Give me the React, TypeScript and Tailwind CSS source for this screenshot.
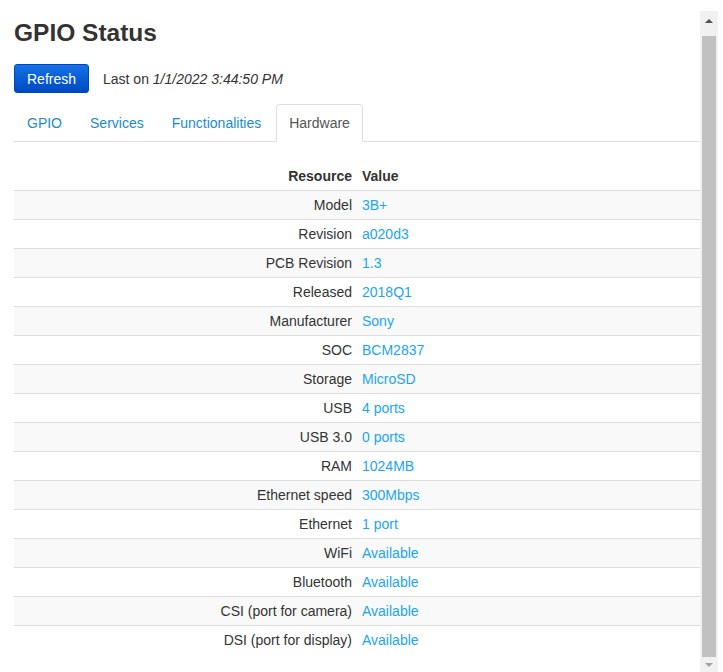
const rows: [string, string][] = [
  ["Model", "3B+"],
  ["Revision", "a020d3"],
  ["PCB Revision", "1.3"],
  ["Released", "2018Q1"],
  ["Manufacturer", "Sony"],
  ["SOC", "BCM2837"],
  ["Storage", "MicroSD"],
  ["USB", "4 ports"],
  ["USB 3.0", "0 ports"],
  ["RAM", "1024MB"],
  ["Ethernet speed", "300Mbps"],
  ["Ethernet", "1 port"],
  ["WiFi", "Available"],
  ["Bluetooth", "Available"],
  ["CSI (port for camera)", "Available"],
  ["DSI (port for display)", "Available"],
];

const tabs = ["GPIO", "Services", "Functionalities", "Hardware"];

// the page's grey scrollbar, drawn
const Scrollbar = () => (
  <div className="mt-[11px] flex h-[661px] w-[18px] shrink-0 flex-col bg-[#f1f1f1]">
    <div className="flex h-[25px] justify-center pt-[8px]">
      <svg width="8" height="4" viewBox="0 0 8 4">
        <path d="M0 4 L4 0 L8 4 Z" fill="#505050" />
      </svg>
    </div>
    <div className="mx-[2px] flex-1 bg-[#c1c1c1]" />
    <div className="flex h-[15px] justify-center pt-[6px]">
      <svg width="8" height="4" viewBox="0 0 8 4">
        <path d="M0 0 L8 0 L4 4 Z" fill="#a3a3a3" />
      </svg>
    </div>
  </div>
);

export default function App() {
  return (
    <div className="flex h-[672px] overflow-hidden bg-white font-['Liberation_Sans',Arial,sans-serif] text-[14px] leading-[20px] text-[#333]">
      <div className="w-[700px] shrink-0 pl-[14px] pt-[19px]">
        <h2 className="mb-[17px] text-[24.5px] leading-[28px] font-bold text-[#333]">GPIO Status</h2>

        <div className="flex items-center">
          <button className="h-[29px] w-[75px] rounded-[3px] border border-[#0046b8] bg-gradient-to-b from-[#1672e6] to-[#0049c2] text-[14px] text-white">
            Refresh
          </button>
          <span className="ml-[14px]">
            Last on <i>1/1/2022 3:44:50 PM</i>
          </span>
        </div>

        <ul className="mt-[11px] flex border-b border-[#ddd]">
          {tabs.map((t) => (
            <li key={t} className="mr-[2px] -mb-px">
              {t === "Hardware" ? (
                <span className="block rounded-t-[4px] border border-[#ddd] border-b-white bg-white px-[12px] py-[8px] text-[#555]">
                  {t}
                </span>
              ) : (
                <span className="block border border-transparent px-[12px] py-[8px] text-[#1b8ad3]">{t}</span>
              )}
            </li>
          ))}
        </ul>

        <table className="mt-[20px] w-full border-collapse">
          <thead>
            <tr>
              <th className="w-1/2 px-[5px] py-[4px] text-right font-bold">Resource</th>
              <th className="w-1/2 px-[5px] py-[4px] text-left font-bold">Value</th>
            </tr>
          </thead>
          <tbody>
            {rows.map(([k, v], i) => (
              <tr key={k} className={i % 2 === 0 ? "bg-[#f9f9f9]" : "bg-white"}>
                <td className="border-t border-[#ddd] px-[5px] py-[4px] text-right">{k}</td>
                <td className="border-t border-[#ddd] px-[5px] py-[4px] text-[#1ba5f5]">{v}</td>
              </tr>
            ))}
          </tbody>
        </table>
      </div>
      <Scrollbar />
    </div>
  );
}
